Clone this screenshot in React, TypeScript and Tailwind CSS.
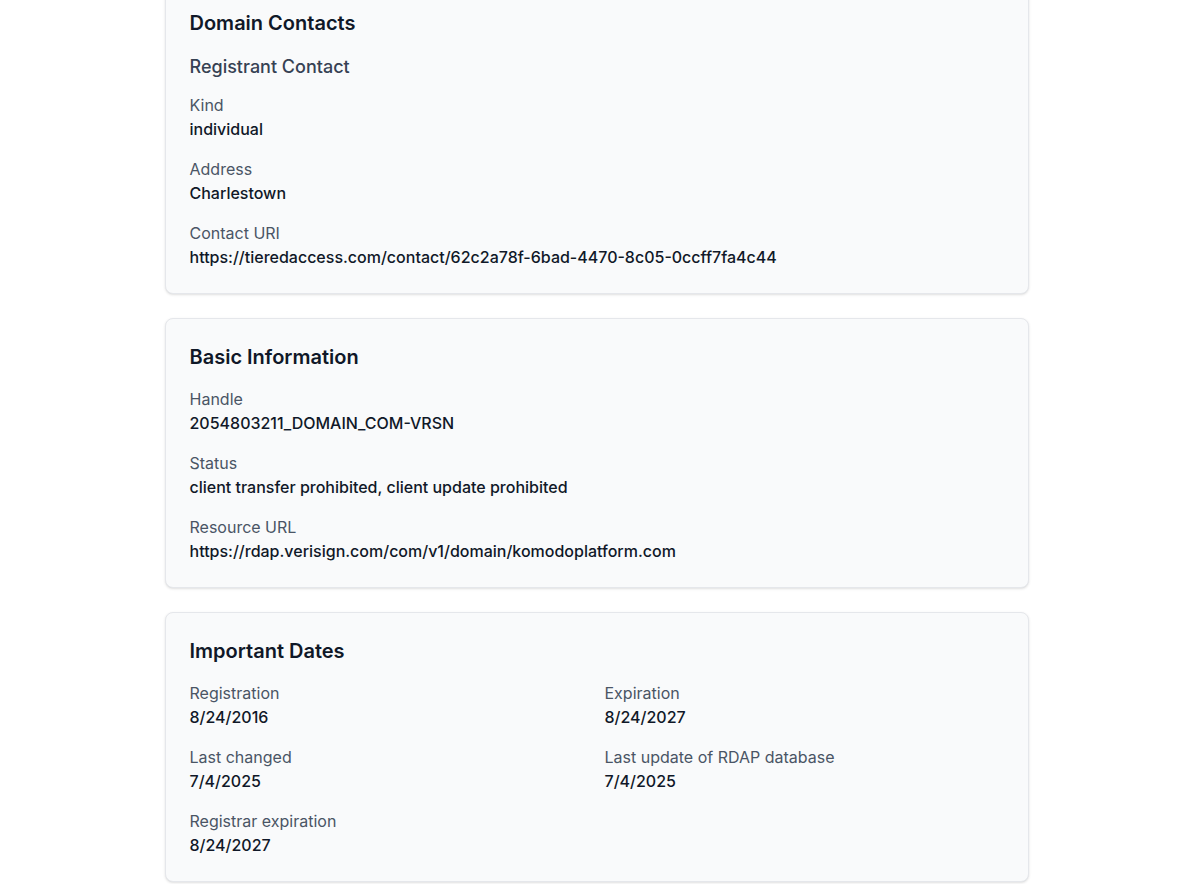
type Field = { label: string; value: string };

const contactFields: Field[] = [
  { label: 'Kind', value: 'individual' },
  { label: 'Address', value: 'Charlestown' },
  { label: 'Contact URI', value: 'https://tieredaccess.com/contact/62c2a78f-6bad-4470-8c05-0ccff7fa4c44' },
];

const basicFields: Field[] = [
  { label: 'Handle', value: '2054803211_DOMAIN_COM-VRSN' },
  { label: 'Status', value: 'client transfer prohibited, client update prohibited' },
  { label: 'Resource URL', value: 'https://rdap.verisign.com/com/v1/domain/komodoplatform.com' },
];

const dateFields: Field[] = [
  { label: 'Registration', value: '8/24/2016' },
  { label: 'Expiration', value: '8/24/2027' },
  { label: 'Last changed', value: '7/4/2025' },
  { label: 'Last update of RDAP database', value: '7/4/2025' },
  { label: 'Registrar expiration', value: '8/24/2027' },
];

function InfoItem({ label, value }: Field) {
  return (
    <div>
      <div className="text-base text-gray-600">{label}</div>
      <div className="text-base font-medium text-gray-900">{value}</div>
    </div>
  );
}

function Card({ title, children }: { title: string; children: React.ReactNode }) {
  return (
    <section className="bg-gray-50 border border-gray-200 rounded-lg shadow-sm p-6">
      <h2 className="text-xl font-semibold text-gray-900 mb-4">{title}</h2>
      {children}
    </section>
  );
}

export default function App() {
  return (
    <div className="h-[884px] overflow-hidden bg-white font-['Inter',sans-serif]">
      <div className="max-w-4xl mx-auto pl-[15px] pr-[17px] -mt-[16px] space-y-6">
        <Card title="Domain Contacts">
          <h3 className="text-lg font-medium text-gray-700 mb-3">Registrant Contact</h3>
          <div className="space-y-4">
            {contactFields.map((f) => (
              <InfoItem key={f.label} {...f} />
            ))}
          </div>
        </Card>

        <Card title="Basic Information">
          <div className="space-y-4">
            {basicFields.map((f) => (
              <InfoItem key={f.label} {...f} />
            ))}
          </div>
        </Card>

        <Card title="Important Dates">
          <div className="grid grid-cols-2 gap-4">
            {dateFields.map((f) => (
              <InfoItem key={f.label} {...f} />
            ))}
          </div>
        </Card>
      </div>
    </div>
  );
}
